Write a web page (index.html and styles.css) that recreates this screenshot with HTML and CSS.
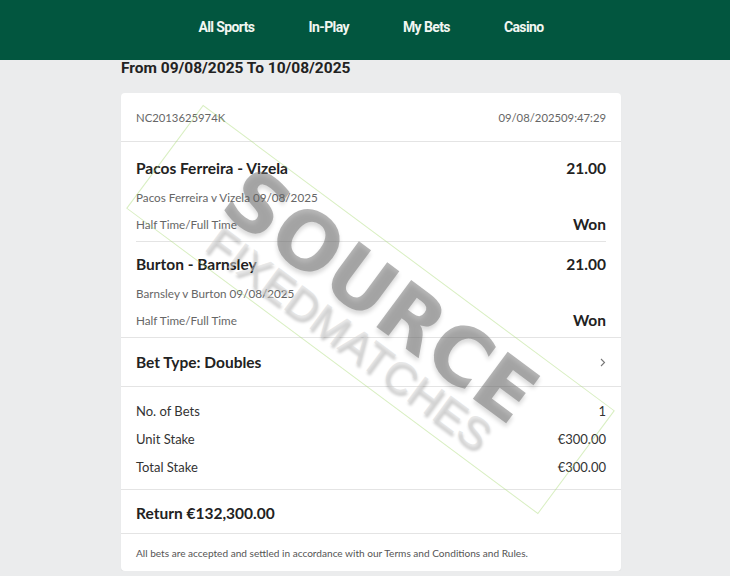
FILE: index.html
```html
<!DOCTYPE html>
<html lang="en">
<head>
<meta charset="UTF-8">
<meta name="viewport" content="width=device-width, initial-scale=1.0">
<title>My Bets</title>
<link rel="stylesheet" href="styles.css">
</head>
<body>

<header class="topbar">
  <nav class="nav">
    <a href="#">All Sports</a>
    <a href="#">In-Play</a>
    <a href="#">My Bets</a>
    <a href="#">Casino</a>
  </nav>
</header>

<main class="content">
  <h2 class="range">From 09/08/2025 To 10/08/2025</h2>

  <section class="slip">
    <div class="slip-head">
      <span>NC2013625974K</span>
      <span>09/08/202509:47:29</span>
    </div>

    <div class="legs">
      <div class="leg">
        <div class="leg-row">
          <span class="leg-title">Pacos Ferreira - Vizela</span>
          <span class="leg-title">21.00</span>
        </div>
        <div class="leg-sub">Pacos Ferreira v Vizela 09/08/2025</div>
        <div class="leg-row leg-market">
          <span>Half Time/Full Time</span>
          <span class="leg-title">Won</span>
        </div>
      </div>
      <div class="leg">
        <div class="leg-row">
          <span class="leg-title">Burton - Barnsley</span>
          <span class="leg-title">21.00</span>
        </div>
        <div class="leg-sub">Barnsley v Burton 09/08/2025</div>
        <div class="leg-row leg-market">
          <span>Half Time/Full Time</span>
          <span class="leg-title">Won</span>
        </div>
      </div>
    </div>

    <div class="bet-type">
      <span>Bet Type: Doubles</span>
      <svg class="chevron" width="6" height="9" viewBox="0 0 6 9"><path d="M1 1l3.5 3.5L1 8" fill="none" stroke="#777" stroke-width="1.1"/></svg>
    </div>

    <div class="summary">
      <div class="summary-row"><span>No. of Bets</span><span>1</span></div>
      <div class="summary-row"><span>Unit Stake</span><span>€300.00</span></div>
      <div class="summary-row"><span>Total Stake</span><span>€300.00</span></div>
    </div>

    <div class="return">Return €132,300.00</div>

    <div class="terms">All bets are accepted and settled in accordance with our Terms and Conditions and Rules.</div>

    <div class="watermark">
      <div class="wm-big">SOURCE</div>
      <div class="wm-small">FIXEDMATCHES</div>
    </div>
  </section>
</main>

</body>
</html>
```

FILE: styles.css
```css
body {
  margin: 0;
  background-color: #ebeced;
  font-family: "Lato", "Open Sans", sans-serif;
  color: #222;
}
.topbar {
  height: 60px;
  background-color: #02563f;
}
.nav {
  display: flex;
  justify-content: center;
  gap: 54px;
  padding-left: 12px;
  height: 100%;
  align-items: center;
  padding-bottom: 7px;
  box-sizing: border-box;
}
.nav a {
  color: #f2f6f2;
  text-decoration: none;
  font-family: "Roboto", sans-serif;
  font-weight: 700;
  font-size: 14px;
  letter-spacing: -0.6px;
}
.content {
  width: 500px;
  margin: 0 auto;
  padding-left: 12px;
}
.range {
  margin: 0;
  height: 33px;
  font-family: "Roboto", sans-serif;
  font-size: 15.5px;
  font-weight: 700;
  line-height: 16px;
  color: #222;
}
.slip {
  position: relative;
  overflow: hidden;
  background-color: #fff;
  border-radius: 4px;
  box-shadow: 0 1px 1px rgba(0,0,0,0.06);
}
.slip-head {
  display: flex;
  justify-content: space-between;
  height: 49px;
  align-items: center;
  padding: 0 15px;
  font-size: 11.3px;
  color: #666;
  border-bottom: 1px solid #e4e4e4;
  box-sizing: border-box;
}
.legs {
  border-bottom: 1px solid #e4e4e4;
}
.leg {
  margin: 0 15px;
  padding: 12px 0 7px;
  border-bottom: 1px solid #e4e4e4;
}
.leg:first-child {
  padding-top: 16px;
}
.leg:last-child {
  border-bottom: none;
}
.leg-row {
  display: flex;
  justify-content: space-between;
  align-items: center;
  height: 20px;
}
.leg-title {
  font-size: 15.5px;
  font-weight: 700;
  color: #222;
}
.leg-sub {
  margin-top: 8px;
  line-height: 22px;
  font-size: 11.7px;
  color: #666;
}
.leg-market {
  margin-top: 6px;
  font-size: 11.7px;
  color: #666;
}
.bet-type {
  display: flex;
  justify-content: space-between;
  align-items: center;
  height: 49px;
  padding: 0 15px;
  font-size: 15.5px;
  font-weight: 700;
  border-bottom: 1px solid #e4e4e4;
  box-sizing: border-box;
}
.summary {
  padding: 10px 15px 8px;
  border-bottom: 1px solid #e4e4e4;
}
.summary-row {
  display: flex;
  justify-content: space-between;
  line-height: 28px;
  font-size: 13px;
  color: #333;
}
.return {
  padding: 13px 15px 10px;
  line-height: 20px;
  font-size: 15.5px;
  font-weight: 700;
  border-bottom: 1px solid #e4e4e4;
}
.terms {
  padding: 12px 15px 11px;
  line-height: 14px;
  font-size: 10.1px;
  color: #555;
}
.watermark {
  position: absolute;
  left: 249px;
  top: 216px;
  width: 511px;
  height: 127px;
  margin: -64px 0 0 -256px;
  border: 1px solid rgba(170, 220, 120, 0.45);
  transform: rotate(36.6deg);
  pointer-events: none;
  text-align: center;
  font-family: "Liberation Sans", sans-serif;
}
.wm-big {
  margin-top: 14px;
  line-height: 66px;
  font-family: "DejaVu Sans", sans-serif;
  font-size: 80px;
  font-weight: 700;
  color: rgba(110, 110, 110, 0.5);
  text-shadow: 2px 3px 4px rgba(0, 0, 0, 0.15);
}
.wm-small {
  line-height: 40px;
  font-size: 44px;
  color: rgba(215, 215, 215, 0.55);
  text-shadow: 2px 2px 3px rgba(0, 0, 0, 0.2);
}
```
